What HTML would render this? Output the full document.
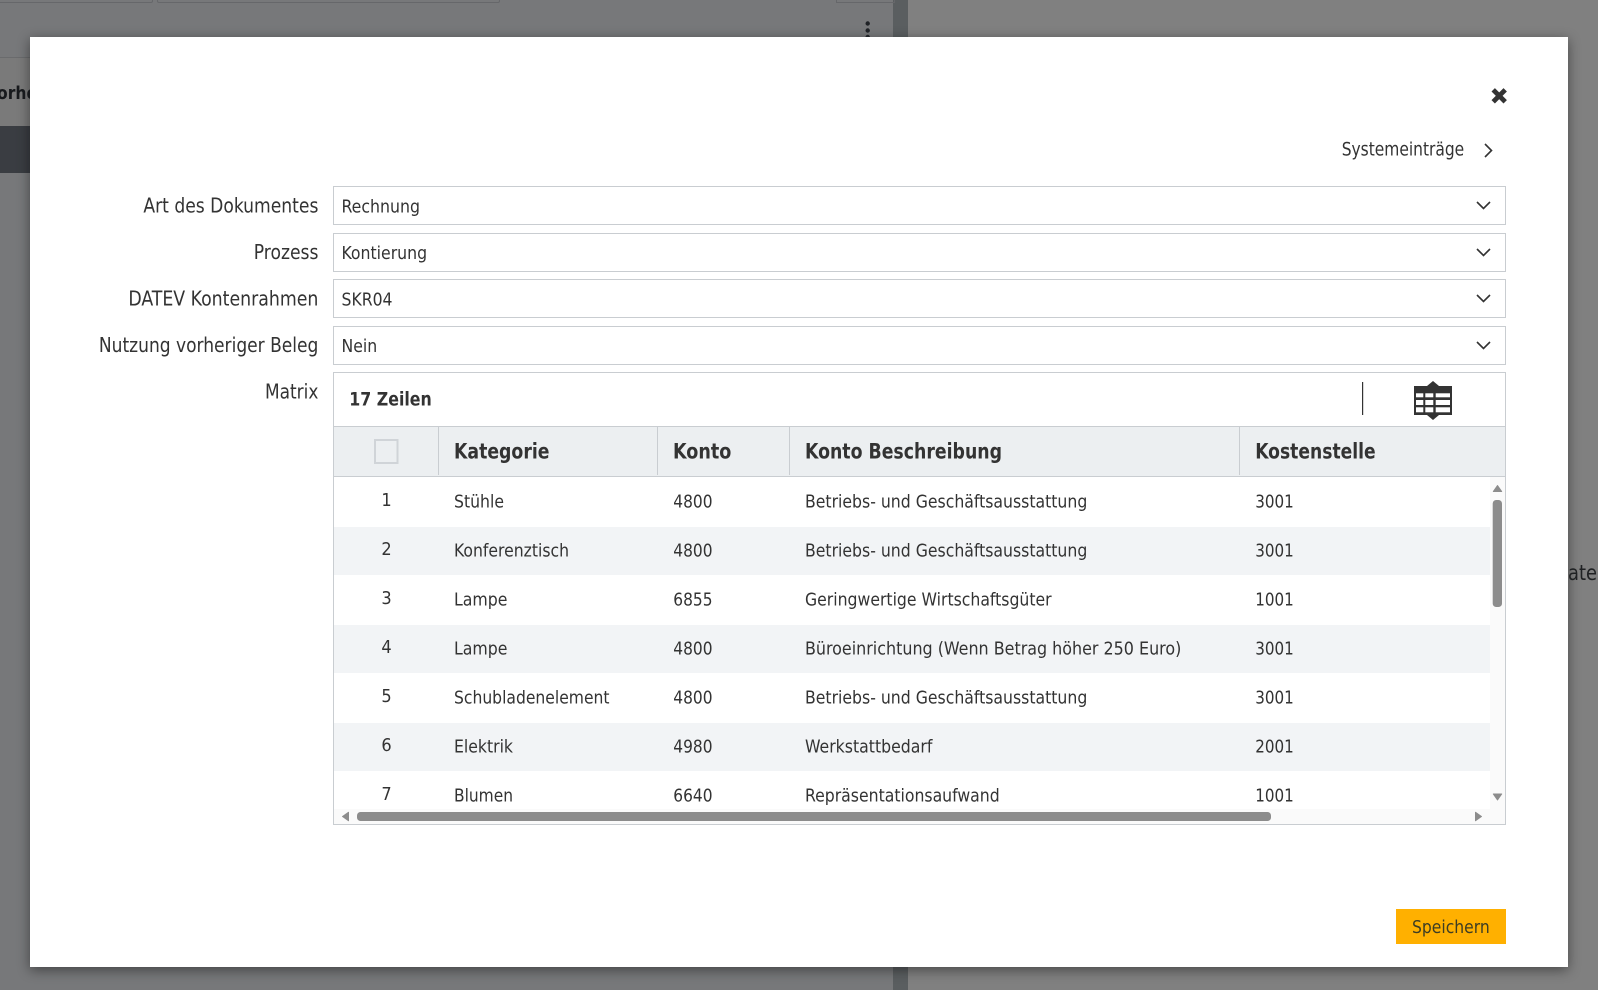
<!DOCTYPE html>
<html lang="de"><head><meta charset="utf-8"><title>Matrix</title>
<style>
html,body{margin:0;padding:0;width:1598px;height:990px;overflow:hidden;background:#808080}
.a{position:absolute}
svg{position:absolute;left:0;top:0}
text{font-family:"DejaVu Sans","Liberation Sans",sans-serif;font-stretch:condensed;fill:#333;font-size:18px}
.l{font-size:20.5px}
.f{font-size:18px}
.h{font-size:21px;font-weight:700}
.n{font-size:18px}
</style></head><body>
<div class="a" style="left:0;top:0;width:893px;height:990px;background:#77787a"></div>
<div class="a" style="left:893px;top:0;width:15px;height:990px;background:#5a5e60"></div>
<div class="a" style="left:0;top:57px;width:30px;height:69px;background:#7a7a7a;border-top:1px solid #6a6b6d"></div>
<div class="a" style="left:0;top:126px;width:30px;height:47px;background:#3a3d42"></div>
<div class="a" style="left:-2px;top:-2px;width:153px;height:3px;border:1px solid #66676a;border-radius:2px"></div>
<div class="a" style="left:157px;top:-2px;width:341px;height:3px;border:1px solid #66676a;border-radius:2px"></div>
<div class="a" style="left:836px;top:-2px;width:57px;height:3px;border:1px solid #66676a"></div>
<div class="a" style="left:30px;top:37px;width:1538px;height:930px;background:#fff;box-shadow:0 3px 12px rgba(0,0,0,.45)"></div>
<svg width="1598" height="990" viewBox="0 0 1598 990" xmlns="http://www.w3.org/2000/svg">
<!-- background details -->
<circle cx="867.7" cy="23.5" r="2.2" fill="#1f2226"/><circle cx="867.7" cy="30.5" r="2.2" fill="#1f2226"/>
<path d="M865.5 37a2.2 2.2 0 0 1 4.4 0z" fill="#1f2226"/>
<svg x="0" y="60" width="30" height="50"><text x="-3" y="39" style="font-weight:700;fill:#17191c;font-size:18px" textLength="40" lengthAdjust="spacingAndGlyphs">orhe</text></svg>
<text x="1568" y="580" style="font-size:21px;fill:#1f2123" textLength="34" lengthAdjust="spacingAndGlyphs">atei</text>

<!-- close + system -->
<path d="M1493.2 89.8l12 12M1505.2 89.8l-12 12" stroke="#333" stroke-width="4.8" fill="none"/>
<text x="1341.7" y="155.7" class="f" textLength="122.5" lengthAdjust="spacingAndGlyphs" style="font-size:19px">Systemeinträge</text>
<path d="M1485 144l6.5 6.5-6.5 6.5" stroke="#333" stroke-width="1.6" fill="none"/>

<!-- labels -->
<text x="143.4" y="212.7" class="l" textLength="175" lengthAdjust="spacingAndGlyphs">Art des Dokumentes</text>
<text x="253.8" y="259.2" class="l" textLength="64.6" lengthAdjust="spacingAndGlyphs">Prozess</text>
<text x="128.4" y="305.7" class="l" textLength="190" lengthAdjust="spacingAndGlyphs">DATEV Kontenrahmen</text>
<text x="98.9" y="352.2" class="l" textLength="219.5" lengthAdjust="spacingAndGlyphs">Nutzung vorheriger Beleg</text>
<text x="265" y="398.7" class="l" textLength="53.4" lengthAdjust="spacingAndGlyphs">Matrix</text>

<!-- fields -->
<g fill="#fff" stroke="#c9cdd1" stroke-width="1">
<rect x="333.5" y="186.5" width="1172" height="38"/>
<rect x="333.5" y="233.5" width="1172" height="38"/>
<rect x="333.5" y="279.5" width="1172" height="38"/>
<rect x="333.5" y="326.5" width="1172" height="38"/>
</g>
<text x="341.5" y="212.3" class="f" textLength="78.5" lengthAdjust="spacingAndGlyphs">Rechnung</text>
<text x="341.5" y="258.8" class="f" textLength="85.6" lengthAdjust="spacingAndGlyphs">Kontierung</text>
<text x="341.5" y="305.3" class="f" textLength="51" lengthAdjust="spacingAndGlyphs">SKR04</text>
<text x="341.5" y="351.8" class="f" textLength="35.7" lengthAdjust="spacingAndGlyphs">Nein</text>
<g stroke="#333" stroke-width="1.6" fill="none">
<path d="M1477 202l6.5 6.5 6.5-6.5"/>
<path d="M1477 249l6.5 6.5 6.5-6.5"/>
<path d="M1477 295l6.5 6.5 6.5-6.5"/>
<path d="M1477 342l6.5 6.5 6.5-6.5"/>
</g>

<!-- matrix box -->
<rect x="333.5" y="372.5" width="1172" height="452" fill="#fff" stroke="#c9cdd1"/>
<text x="349.3" y="405.7" class="h" style="font-size:18.5px" textLength="82.5" lengthAdjust="spacingAndGlyphs">17 Zeilen</text>
<rect x="1362" y="382" width="1.2" height="33" fill="#333"/>
<!-- table icon -->
<path d="M1414 386h13l6-5 6 5h13v29h-13l-6 5-6-5h-13z" fill="#333"/>
<g fill="#fff">
<rect x="1416" y="393.3" width="7.3" height="4"/><rect x="1425.3" y="393.3" width="8" height="4"/><rect x="1435.7" y="393.3" width="14.3" height="4"/>
<rect x="1416" y="400" width="7.3" height="5"/><rect x="1425.3" y="400" width="8" height="5"/><rect x="1435.7" y="400" width="14.3" height="5"/>
<rect x="1416" y="407.3" width="7.3" height="5"/><rect x="1425.3" y="407.3" width="8" height="5"/><rect x="1435.7" y="407.3" width="14.3" height="5"/>
</g>

<!-- header -->
<rect x="334" y="426" width="1171" height="50" fill="#eceff1"/>
<rect x="334" y="426" width="1171" height="1" fill="#c9cdd1"/>
<rect x="334" y="476" width="1171" height="1" fill="#c9cdd1"/>
<g fill="#c9cdd1">
<rect x="438" y="427" width="1" height="48"/><rect x="657" y="427" width="1" height="48"/><rect x="789" y="427" width="1" height="48"/><rect x="1239" y="427" width="1" height="48"/>
</g>
<rect x="375" y="440" width="22.5" height="23" fill="#eceff1" stroke="#d0d4d8" stroke-width="2"/>
<text x="454" y="458.3" class="h" textLength="95.5" lengthAdjust="spacingAndGlyphs">Kategorie</text>
<text x="673" y="458.3" class="h" textLength="58.3" lengthAdjust="spacingAndGlyphs">Konto</text>
<text x="805" y="458.3" class="h" textLength="197" lengthAdjust="spacingAndGlyphs">Konto Beschreibung</text>
<text x="1255.2" y="458.3" class="h" textLength="120.5" lengthAdjust="spacingAndGlyphs">Kostenstelle</text>

<!-- rows -->
<g fill="#f2f4f6">
<rect x="334" y="527" width="1156" height="48"/><rect x="334" y="625" width="1156" height="48"/><rect x="334" y="723" width="1156" height="48"/>
</g>
<rect x="1490" y="477" width="15" height="347" fill="#fafafa"/>

<g text-anchor="middle">
<text x="386.5" y="506" class="n">1</text><text x="386.5" y="555" class="n">2</text><text x="386.5" y="604" class="n">3</text><text x="386.5" y="653" class="n">4</text><text x="386.5" y="702" class="n">5</text><text x="386.5" y="751" class="n">6</text><text x="386.5" y="800" class="n">7</text>
</g>

<text x="454" y="507.7" textLength="50" lengthAdjust="spacingAndGlyphs">Stühle</text>
<text x="673.3" y="507.7" textLength="39.2" lengthAdjust="spacingAndGlyphs">4800</text>
<text x="805" y="507.7" textLength="282.3" lengthAdjust="spacingAndGlyphs">Betriebs- und Geschäftsausstattung</text>
<text x="1255.2" y="507.7" textLength="38.5" lengthAdjust="spacingAndGlyphs">3001</text>

<text x="454" y="556.7" textLength="115" lengthAdjust="spacingAndGlyphs">Konferenztisch</text>
<text x="673.3" y="556.7" textLength="39.2" lengthAdjust="spacingAndGlyphs">4800</text>
<text x="805" y="556.7" textLength="282.3" lengthAdjust="spacingAndGlyphs">Betriebs- und Geschäftsausstattung</text>
<text x="1255.2" y="556.7" textLength="38.5" lengthAdjust="spacingAndGlyphs">3001</text>

<text x="454" y="605.7" textLength="53.5" lengthAdjust="spacingAndGlyphs">Lampe</text>
<text x="673.3" y="605.7" textLength="39.2" lengthAdjust="spacingAndGlyphs">6855</text>
<text x="805" y="605.7" textLength="246.6" lengthAdjust="spacingAndGlyphs">Geringwertige Wirtschaftsgüter</text>
<text x="1255.2" y="605.7" textLength="38.5" lengthAdjust="spacingAndGlyphs">1001</text>

<text x="454" y="654.7" textLength="53.5" lengthAdjust="spacingAndGlyphs">Lampe</text>
<text x="673.3" y="654.7" textLength="39.2" lengthAdjust="spacingAndGlyphs">4800</text>
<text x="805" y="654.7" textLength="376.3" lengthAdjust="spacingAndGlyphs">Büroeinrichtung (Wenn Betrag höher 250 Euro)</text>
<text x="1255.2" y="654.7" textLength="38.5" lengthAdjust="spacingAndGlyphs">3001</text>

<text x="454" y="703.7" textLength="155.5" lengthAdjust="spacingAndGlyphs">Schubladenelement</text>
<text x="673.3" y="703.7" textLength="39.2" lengthAdjust="spacingAndGlyphs">4800</text>
<text x="805" y="703.7" textLength="282.3" lengthAdjust="spacingAndGlyphs">Betriebs- und Geschäftsausstattung</text>
<text x="1255.2" y="703.7" textLength="38.5" lengthAdjust="spacingAndGlyphs">3001</text>

<text x="454" y="752.7" textLength="59" lengthAdjust="spacingAndGlyphs">Elektrik</text>
<text x="673.3" y="752.7" textLength="39.2" lengthAdjust="spacingAndGlyphs">4980</text>
<text x="805" y="752.7" textLength="127.4" lengthAdjust="spacingAndGlyphs">Werkstattbedarf</text>
<text x="1255.2" y="752.7" textLength="38.5" lengthAdjust="spacingAndGlyphs">2001</text>

<text x="454" y="801.7" textLength="59" lengthAdjust="spacingAndGlyphs">Blumen</text>
<text x="673.3" y="801.7" textLength="39.2" lengthAdjust="spacingAndGlyphs">6640</text>
<text x="805" y="801.7" textLength="194.7" lengthAdjust="spacingAndGlyphs">Repräsentationsaufwand</text>
<text x="1255.2" y="801.7" textLength="38.5" lengthAdjust="spacingAndGlyphs">1001</text>

<!-- scrollbars -->
<rect x="334" y="809" width="1171" height="15" fill="#fafafa"/>
<g fill="#8c8c8c" stroke="#8c8c8c" stroke-width="0">
<rect x="1492.7" y="500" width="9.3" height="107" rx="3.5"/>
<rect x="357" y="812" width="914" height="9" rx="3.5"/>
<g stroke-width="1" stroke-linejoin="round">
<path d="M1497.5 485.5l4.2 6h-8.4z"/>
<path d="M1497.5 800l-4.2-6h8.4z"/>
<path d="M342.5 816.5l6-4.2v8.4z"/>
<path d="M1481.5 816.5l-6-4.2v8.4z"/>
</g>
</g>

<!-- button -->
<rect x="1396" y="909" width="110" height="35" fill="#ffb000"/>
<text x="1412" y="933" style="fill:#3d3d24" textLength="77.7" lengthAdjust="spacingAndGlyphs">Speichern</text>
</svg>
</body></html>
